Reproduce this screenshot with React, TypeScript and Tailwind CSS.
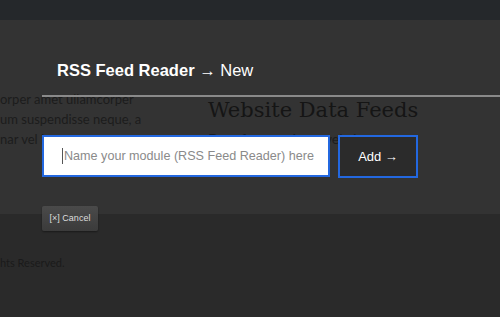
export default function App() {
  return (
    <div className="relative h-[317px] w-[500px] overflow-hidden bg-[#2a2a2a] font-['Liberation_Sans',Arial,sans-serif]">
      {/* page underneath the dialog */}
      <div className="h-5 bg-[#25282b]" />
      <div className="flex h-[194px] bg-[#333333] pt-[69px]">
        <div className="w-[200px] font-['Lato',sans-serif] text-[13px] leading-[20px] text-[#1c1c1c]">
          <p>orper amet ullamcorper</p>
          <p>um suspendisse neque, a</p>
          <p>nar vel integer</p>
        </div>
        <div className="pl-2">
          <h1 className="mt-[6px] font-['DejaVu_Serif',serif] text-[21px] leading-[30px] text-[#151515]">
            Website Data Feeds
          </h1>
          <p className="mt-[3px] whitespace-nowrap font-['Lato',sans-serif] text-[14px] text-[#1c1c1c]">
            Data from various websites
          </p>
        </div>
      </div>
      <div className="pt-[41px] font-['Lato',sans-serif] text-[11px] text-[#1a1a1a]">
        hts Reserved.
      </div>

      {/* dialog */}
      <div className="absolute inset-x-0 top-5 pl-[42px]">
        <h2 className="mt-[40px] pl-[15px] text-[16.5px] leading-5 text-white">
          <span className="font-bold">RSS Feed Reader</span> → New
        </h2>
        <div className="mt-[15px] h-[2px] bg-[#8a8a8a]" />
        <div className="mt-[38px] flex gap-2">
          <div className="flex h-[42px] w-[288px] items-center border-2 border-[#2368e0] bg-white pl-[18px]">
            <span className="mr-px h-[16px] w-px shrink-0 bg-[#555]" />
            <span className="whitespace-nowrap text-[12.6px] text-[#8a8a8a]">
              Name your module (RSS Feed Reader) here
            </span>
          </div>
          <button className="flex h-[43px] w-[80px] items-center justify-center border-2 border-[#2368e0] bg-[#2b2b2b] text-[13px] text-white">
            Add →
          </button>
        </div>
        <button className="mt-[28px] flex h-[25px] w-[56px] items-center justify-center rounded-[2px] bg-gradient-to-b from-[#4a4a4a] to-[#3b3b3b] text-[9px] text-[#dddddd] shadow-[0_1px_2px_rgba(0,0,0,0.4)]">
          [×] Cancel
        </button>
      </div>
    </div>
  );
}
